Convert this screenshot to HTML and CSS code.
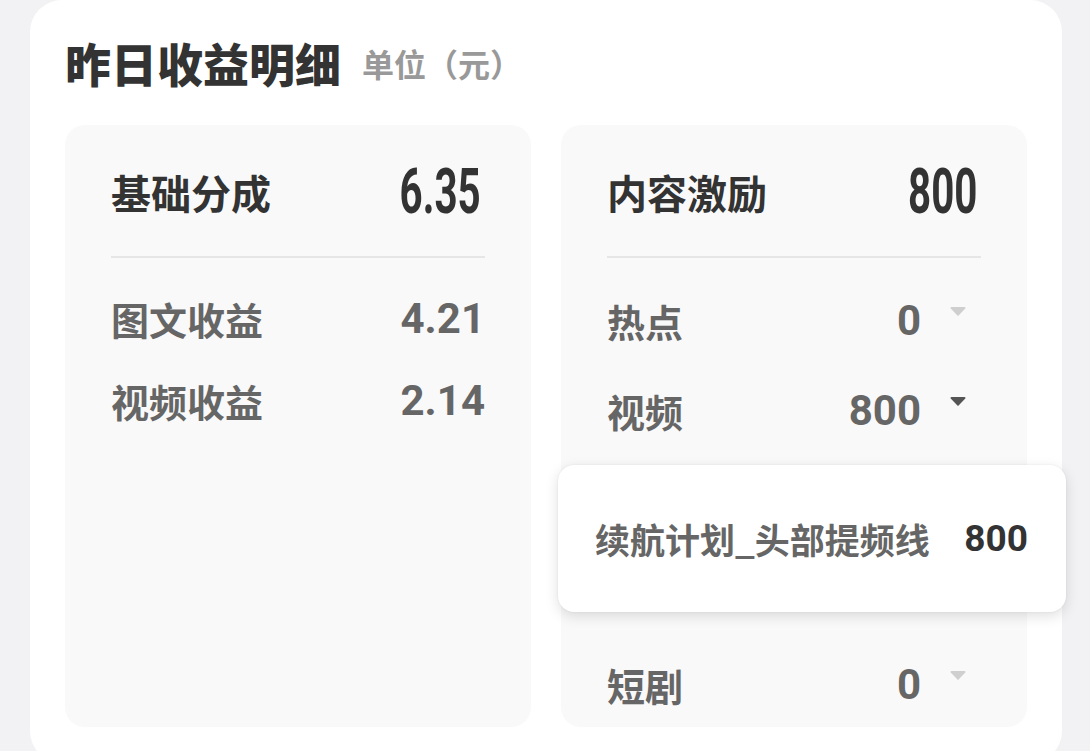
FILE: index.html
```html
<!DOCTYPE html>
<html lang="zh-CN">
<head>
    <meta charset="UTF-8">
    <meta name="viewport" content="width=device-width, initial-scale=1.0">
    <title>昨日收益明细</title>
    <link rel="stylesheet" href="styles.css">
</head>
<body>
    <main class="page">
        <section class="income-card">
            <div class="card-title">
                <h1>昨日收益明细</h1>
                <span class="unit">单位（元）</span>
            </div>

            <div class="panels">
                <!-- 基础分成 -->
                <div class="panel">
                    <div class="panel-head">
                        <span class="head-label">基础分成</span>
                        <span class="big-num">6.35</span>
                    </div>
                    <div class="divider"></div>
                    <div class="row row-left">
                        <span class="row-label">图文收益</span>
                        <span class="row-num">4.21</span>
                    </div>
                    <div class="row row-left">
                        <span class="row-label">视频收益</span>
                        <span class="row-num">2.14</span>
                    </div>
                </div>

                <!-- 内容激励 -->
                <div class="panel">
                    <div class="panel-head">
                        <span class="head-label">内容激励</span>
                        <span class="big-num">800</span>
                    </div>
                    <div class="divider"></div>
                    <div class="row row-first">
                        <span class="row-label">热点</span>
                        <span class="row-value">
                            <span class="row-num">0</span>
                            <svg class="caret" viewBox="0 0 16 10" width="16" height="10"><path d="M1.5 1h13a1 1 0 0 1 .8 1.6l-6.5 6.6a1 1 0 0 1-1.6 0L.7 2.6A1 1 0 0 1 1.5 1z" fill="#cfcfcf"/></svg>
                        </span>
                    </div>
                    <div class="row">
                        <span class="row-label">视频</span>
                        <span class="row-value">
                            <span class="row-num">800</span>
                            <svg class="caret" viewBox="0 0 16 10" width="16" height="10"><path d="M1.5 1h13a1 1 0 0 1 .8 1.6l-6.5 6.6a1 1 0 0 1-1.6 0L.7 2.6A1 1 0 0 1 1.5 1z" fill="#555"/></svg>
                        </span>
                    </div>
                    <div class="sub-pop">
                        <span class="sub-label">续航计划_头部提频线</span>
                        <span class="sub-num">800</span>
                    </div>
                    <div class="row row-last">
                        <span class="row-label">短剧</span>
                        <span class="row-value">
                            <span class="row-num">0</span>
                            <svg class="caret" viewBox="0 0 16 10" width="16" height="10"><path d="M1.5 1h13a1 1 0 0 1 .8 1.6l-6.5 6.6a1 1 0 0 1-1.6 0L.7 2.6A1 1 0 0 1 1.5 1z" fill="#cfcfcf"/></svg>
                        </span>
                    </div>
                </div>
            </div>
        </section>
    </main>
</body>
</html>
```

FILE: styles.css
```css
/* Basic Reset */
* {
    margin: 0;
    padding: 0;
    box-sizing: border-box;
}

body {
    font-family: "Noto Sans CJK SC", "Noto Sans", sans-serif;
    background-color: #f2f2f4;
    color: #333;
    overflow: hidden;
}

.page {
    padding-left: 30px;
}

.income-card {
    width: 1032px;
    background: #fff;
    border-radius: 32px;
    padding: 40px 35px 36px;
}

.card-title {
    display: flex;
    align-items: center;
    height: 45px;
}

.card-title h1 {
    font-size: 46px;
    line-height: 45px;
    font-weight: 900;
    color: #333;
}

.unit {
    margin-left: 21px;
    font-size: 32px;
    line-height: 32px;
    font-weight: 700;
    color: #999;
}

.panels {
    display: grid;
    grid-template-columns: 466px 466px;
    gap: 30px;
    margin-top: 40px;
}

.panel {
    background: #f9f9f9;
    border-radius: 20px;
    padding: 35px 46px 3px;
}

.panel-head {
    display: flex;
    justify-content: space-between;
    align-items: center;
    height: 64px;
}

.head-label {
    font-size: 40px;
    font-weight: 700;
    color: #333;
}

/* condensed digits for the totals */
.big-num {
    display: inline-block;
    font-family: Roboto, "Liberation Sans", sans-serif;
    font-size: 63px;
    font-weight: 700;
    line-height: 64px;
    color: #333;
    transform: scaleX(0.64);
    transform-origin: right center;
    margin-right: 4px;
}

.divider {
    height: 2px;
    background: #e6e6e6;
    margin-top: 32px;
}

.row {
    display: flex;
    justify-content: space-between;
    align-items: center;
    height: 80px;
    margin-top: 10px;
}

.row-left {
    height: 82px;
    margin-top: 0;
}

.divider + .row-left {
    margin-top: 19px;
}

.row-first {
    margin-top: 22px;
}

.row-last {
    margin-top: 32px;
}

.row-label {
    font-size: 38px;
    font-weight: 700;
    color: #666;
}

.row-num {
    font-family: Roboto, "Liberation Sans", sans-serif;
    font-size: 42px;
    font-weight: 700;
    color: #666;
}

.row-value {
    display: flex;
    align-items: center;
}

.caret {
    margin-left: 29px;
    margin-right: 15px;
    margin-bottom: 18px;
}

/* expanded detail under 视频 */
.sub-pop {
    display: flex;
    justify-content: space-between;
    align-items: center;
    height: 147px;
    margin: 15px -85px 0 -49px;
    padding: 0 38px 0 37px;
    background: #fff;
    border-radius: 16px;
    box-shadow: 0 4px 14px rgba(0, 0, 0, 0.13), 0 0 2px rgba(0, 0, 0, 0.08);
}

.sub-label {
    font-size: 35px;
    font-weight: 700;
    color: #666;
}

.sub-num {
    font-family: Roboto, "Liberation Sans", sans-serif;
    font-size: 37px;
    font-weight: 700;
    color: #333;
}
```
